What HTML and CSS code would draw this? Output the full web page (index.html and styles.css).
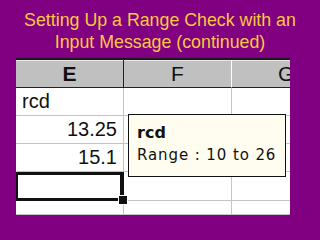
FILE: index.html
```html
<!DOCTYPE html>
<html>
<head>
<meta charset="utf-8">
<link rel="stylesheet" href="styles.css">
</head>
<body>
<h1 class="title">Setting Up a Range Check with an<br>Input Message (continued)</h1>
<div class="sheet">
  <div class="grid">
    <div class="hdr hdr-e">E</div>
    <div class="hdr">F</div>
    <div class="hdr hdr-g">G</div>

    <div class="cell">rcd</div>
    <div class="cell"></div>
    <div class="cell last"></div>

    <div class="cell num">13.25</div>
    <div class="cell"></div>
    <div class="cell last"></div>

    <div class="cell num">15.1</div>
    <div class="cell"></div>
    <div class="cell last"></div>

    <div class="cell sel"><span class="handle"></span></div>
    <div class="cell"></div>
    <div class="cell last"></div>

    <div class="cell short"></div>
    <div class="cell short"></div>
    <div class="cell short last"></div>
  </div>
  <div class="tip">
    <div class="tip-title">rcd</div>
    <div class="tip-text">Range : 10 to 26</div>
  </div>
</div>
</body>
</html>
```
FILE: styles.css
```css
html, body {
  margin: 0;
  padding: 0;
}
body {
  width: 320px;
  height: 240px;
  background: #810081;
  overflow: hidden;
  font-family: "Liberation Sans", Arial, sans-serif;
}
.title {
  margin: 0;
  padding-top: 9px;
  height: 58px;
  box-sizing: border-box;
  text-align: center;
  color: #f8c840;
  font-weight: normal;
  font-size: 17.8px;
  line-height: 22px;
}
.sheet {
  position: relative;
  margin-left: 16px;
  width: 274px;
  height: 157px;
  overflow: hidden;
  background: #ffffff;
  border-top: 2px solid #1a1a1a;
  box-sizing: border-box;
}
.grid {
  display: grid;
  grid-template-columns: 108px 108px 60px;
  grid-template-rows: 28px 28px 28px 28px 29px 14px;
}
.hdr {
  background: #c0c0c0;
  border-right: 1px solid #ffffff;
  border-bottom: 1px solid #222222;
  box-shadow: inset 0 1px 0 #e8e8e8;
  font-size: 21px;
  line-height: 27px;
  text-align: center;
  color: #111;
}
.hdr-e {
  font-weight: bold;
  border-right: 1px solid #222222;
}
.hdr-g {
  text-align: left;
  padding-left: 46px;
  border-right: none;
}
.cell {
  position: relative;
  border-right: 1px solid #c4c4c4;
  border-bottom: 1px solid #c4c4c4;
  font-size: 20px;
  line-height: 27px;
  padding: 0 6px;
  color: #111;
}
.cell.last {
  border-right: none;
}
.num {
  text-align: right;
}
.sel {
  border: 3px solid #111;
  border-right-width: 4px;
  border-left-width: 2px;
}
.handle {
  position: absolute;
  right: -8px;
  bottom: -7px;
  width: 8px;
  height: 8px;
  background: #111;
  border: 1px solid #fff;
  z-index: 2;
}
.tip {
  position: absolute;
  left: 112px;
  top: 54px;
  width: 158px;
  height: 63px;
  box-sizing: border-box;
  background: #fffdf0;
  border: 1px solid #111;
  padding: 8px 0 0 8px;
  font-family: "DejaVu Sans", Verdana, sans-serif;
  color: #111;
  z-index: 3;
}
.tip-title {
  font-weight: bold;
  font-size: 16px;
  line-height: 20px;
}
.tip-text {
  font-size: 15px;
  letter-spacing: 0.9px;
  line-height: 25px;
}
```
